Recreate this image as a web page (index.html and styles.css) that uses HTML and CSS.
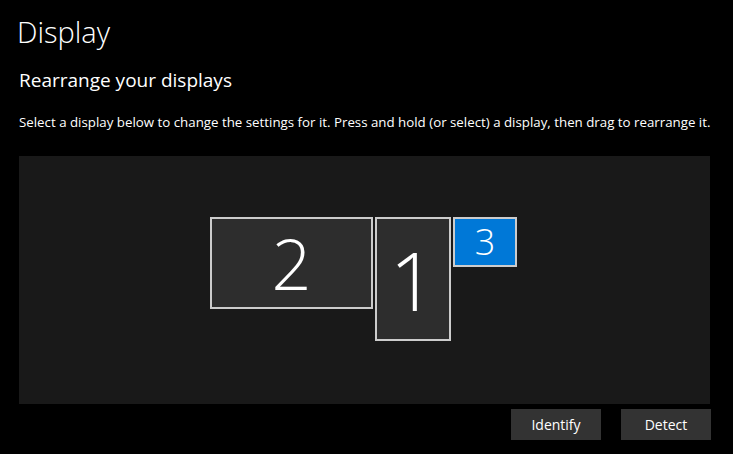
FILE: index.html
```html
<!DOCTYPE html>
<html lang="en">
<head>
    <meta charset="UTF-8">
    <title>Display</title>
    <link rel="stylesheet" href="styles.css">
</head>
<body>
    <div id="page">
        <h1 class="title">Display</h1>
        <h2 class="subtitle">Rearrange your displays</h2>
        <p class="hint">Select a display below to change the settings for it. Press and hold (or select) a display, then drag to rearrange it.</p>

        <div id="arrangeArea">
            <div class="monitor m2"><span>2</span></div>
            <div class="monitor m1"><span>1</span></div>
            <div class="monitor m3 selected"><span>3</span></div>
        </div>

        <div class="actions">
            <button class="btn">Identify</button>
            <button class="btn">Detect</button>
        </div>
    </div>
</body>
</html>
```

FILE: styles.css
```css
body {
    margin: 0;
    padding: 0;
    background-color: #000000;
    color: #ffffff;
    font-family: 'Open Sans', 'Noto Sans', sans-serif;
}
#page {
    padding: 14px 22px 0 19px;
}
.title {
    margin: 0 0 0 -2px;
    font-size: 29px;
    font-weight: 300;
    line-height: 36px;
}
.subtitle {
    margin: 17px 0 0 0;
    font-size: 19px;
    font-weight: 400;
    line-height: 26px;
}
.hint {
    margin: 19px 0 0 0;
    font-size: 13.3px;
    line-height: 20px;
    white-space: nowrap;
}
#arrangeArea {
    position: relative;
    margin-top: 24px;
    width: 691px;
    height: 248px;
    background-color: #191919;
}
.monitor {
    position: absolute;
    box-sizing: border-box;
    border: 2px solid #cccccc;
    background-color: #2d2d2d;
    display: flex;
    align-items: center;
    justify-content: center;
    font-weight: 300;
    line-height: 1;
}
.monitor.selected {
    background-color: #0078d7;
}
.m2 {
    left: 191px;
    top: 61px;
    width: 163px;
    height: 92px;
    font-size: 70px;
}
.m1 {
    left: 356px;
    top: 61px;
    width: 76px;
    height: 124px;
    font-size: 82px;
}
.m3 {
    left: 434px;
    top: 61px;
    width: 64px;
    height: 50px;
    font-size: 36px;
}
.actions {
    display: flex;
    justify-content: flex-end;
    gap: 20px;
    width: 692px;
    margin-top: 5px;
}
.btn {
    width: 90px;
    height: 31px;
    border: none;
    background-color: #333333;
    color: #ffffff;
    font-family: 'Open Sans', 'Noto Sans', sans-serif;
    font-size: 14px;
    padding: 0;
}
```
